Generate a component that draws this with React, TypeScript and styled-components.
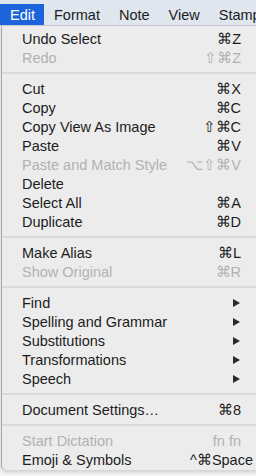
import styled, { createGlobalStyle } from 'styled-components'

type Item =
    | { kind: 'sep' }
    | { kind: 'item', label: string, shortcut?: string, disabled?: boolean, submenu?: boolean, wide?: boolean }

const items: Item[] = [
    { kind: 'item', label: 'Undo Select', shortcut: '⌘Z' },
    { kind: 'item', label: 'Redo', shortcut: '⇧⌘Z', disabled: true },
    { kind: 'sep' },
    { kind: 'item', label: 'Cut', shortcut: '⌘X' },
    { kind: 'item', label: 'Copy', shortcut: '⌘C' },
    { kind: 'item', label: 'Copy View As Image', shortcut: '⇧⌘C' },
    { kind: 'item', label: 'Paste', shortcut: '⌘V' },
    { kind: 'item', label: 'Paste and Match Style', shortcut: '⌥⇧⌘V', disabled: true },
    { kind: 'item', label: 'Delete' },
    { kind: 'item', label: 'Select All', shortcut: '⌘A' },
    { kind: 'item', label: 'Duplicate', shortcut: '⌘D' },
    { kind: 'sep' },
    { kind: 'item', label: 'Make Alias', shortcut: '⌘L' },
    { kind: 'item', label: 'Show Original', shortcut: '⌘R', disabled: true },
    { kind: 'sep' },
    { kind: 'item', label: 'Find', submenu: true },
    { kind: 'item', label: 'Spelling and Grammar', submenu: true },
    { kind: 'item', label: 'Substitutions', submenu: true },
    { kind: 'item', label: 'Transformations', submenu: true },
    { kind: 'item', label: 'Speech', submenu: true },
    { kind: 'sep' },
    { kind: 'item', label: 'Document Settings…', shortcut: '⌘8' },
    { kind: 'sep' },
    { kind: 'item', label: 'Start Dictation', shortcut: 'fn fn', disabled: true },
    { kind: 'item', label: 'Emoji & Symbols', shortcut: '^⌘Space', wide: true },
]

const menus = ['Edit', 'Format', 'Note', 'View', 'Stamp']

export default function App() {
    return (
        <>
            <GlobalStyle />
            <Screen>
                <MenuBar>
                    {menus.map((m, i) => (
                        <MenuTitle key={m} $active={i === 0}>{m}</MenuTitle>
                    ))}
                </MenuBar>
                <Dropdown>
                    {items.map((it, i) =>
                        it.kind === 'sep' ? (
                            <Separator key={i} />
                        ) : (
                            <Row key={i} $disabled={it.disabled}>
                                <Label>{it.label}</Label>
                                {it.shortcut && <Shortcut $wide={it.wide}>{it.shortcut}</Shortcut>}
                                {it.submenu && <Arrow />}
                            </Row>
                        )
                    )}
                </Dropdown>
            </Screen>
        </>
    )
}

const GlobalStyle = createGlobalStyle`
    html, body {
        margin: 0;
        padding: 0;
        background: #f6f6f6;
    }
    * {
        box-sizing: border-box;
    }
`

const Screen = styled.div`
    width: 256px;
    height: 476px;
    overflow: hidden;
    font-family: "Liberation Sans", Arial, sans-serif;
    font-size: 14.5px;
    color: #1c1c1c;
`

const MenuBar = styled.div`
    display: flex;
    align-items: flex-end;
    height: 26px;
    padding-top: 4px;
    background: #dfe6ee;
    border-bottom: 1px solid #c9ced4;
    white-space: nowrap;
    overflow: hidden;
`

const MenuTitle = styled.div<{ $active?: boolean }>`
    display: flex;
    align-items: center;
    flex-shrink: 0;
    height: 21px;
    padding: 0 9px 0 10px;
    background: ${p => (p.$active ? '#1b64dc' : 'transparent')};
    color: ${p => (p.$active ? '#fff' : '#1c1c1c')};
    font-size: 14.5px;
`

const Dropdown = styled.div`
    display: flex;
    flex-direction: column;
    margin-left: 1px;
    width: 270px;
    padding: 3px 0 1px;
    background: #ececec;
    border-left: 1px solid #a8a8a8;
    border-bottom-left-radius: 5px;
    box-shadow: 0 2px 4px rgba(0, 0, 0, 0.18);
`

const Row = styled.div<{ $disabled?: boolean }>`
    display: flex;
    align-items: center;
    height: 19px;
    padding: 0 30px 0 20px;
    color: ${p => (p.$disabled ? '#b2b2b2' : '#1c1c1c')};
    white-space: nowrap;
`

const Label = styled.span`
    flex: 1;
`

const Shortcut = styled.span<{ $wide?: boolean }>`
    margin-right: ${p => (p.$wide ? '-12px' : '0')};
`

const Arrow = styled.span`
    width: 0;
    height: 0;
    margin-right: 1px;
    border-top: 4.5px solid transparent;
    border-bottom: 4.5px solid transparent;
    border-left: 7px solid #2a2a2a;
`

const Separator = styled.div`
    height: 2px;
    margin: 5px 0;
    background: #d9d9d9;
`
